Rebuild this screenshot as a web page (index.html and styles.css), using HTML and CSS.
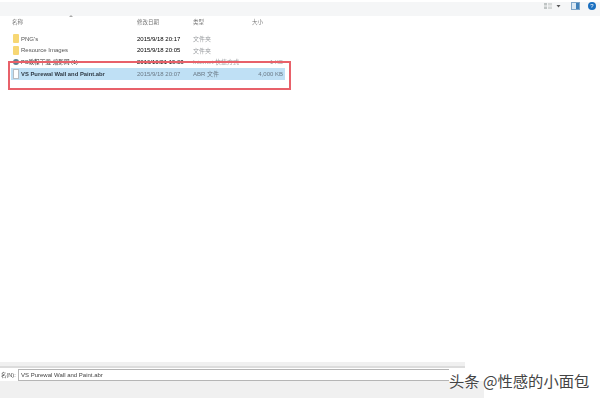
FILE: index.html
```html
<!DOCTYPE html>
<html lang="en">
<head>
  <meta charset="UTF-8" />
  <title>Save dialog</title>
  <link rel="stylesheet" href="styles.css">
</head>
<body>
  <div class="window">
    <div class="toolbar">
      <svg class="tool-views" width="18" height="8" viewBox="0 0 18 8">
        <rect x="0" y="1" width="3" height="2.5" fill="#bfc4c4"/>
        <rect x="4" y="1" width="4" height="2.5" fill="#d5d8d8"/>
        <rect x="0" y="4.5" width="3" height="2.5" fill="#bfc4c4"/>
        <rect x="4" y="4.5" width="4" height="2.5" fill="#d5d8d8"/>
        <path d="M12.5 3h4l-2 2.5z" fill="#555"/>
      </svg>
      <svg class="tool-pane" width="9" height="8" viewBox="0 0 9 8">
        <rect x="0.5" y="0.5" width="8" height="7" fill="#dbe8f3" stroke="#7fa6c9"/>
        <rect x="5" y="1" width="3" height="6" fill="#3f7fb8"/>
      </svg>
      <span class="tool-help">?</span>
    </div>

    <div class="files">
      <div class="row head">
        <span class="name">名称</span>
        <span class="date">修改日期</span>
        <span class="type">类型</span>
        <span class="size">大小</span>
      </div>
      <div class="sort-mark"></div>

      <div class="row first">
        <span class="name"><i class="folder"></i>PNG's</span>
        <span class="date">2015/9/18 20:17</span>
        <span class="type">文件夹</span>
        <span class="size"></span>
      </div>
      <div class="row">
        <span class="name"><i class="folder"></i>Resource Images</span>
        <span class="date">2015/9/18 20:05</span>
        <span class="type">文件夹</span>
        <span class="size"></span>
      </div>
      <div class="row cut">
        <span class="name"><i class="link"></i>PS教程下载-缩影网 (1)</span>
        <span class="date">2016/10/21 19:03</span>
        <span class="type">Internet 快捷方式</span>
        <span class="size">1 KB</span>
      </div>
      <div class="row selected">
        <span class="name"><i class="doc"></i>VS Purewal Wall and Paint.abr</span>
        <span class="date">2015/9/18 20:07</span>
        <span class="type">ABR 文件</span>
        <span class="size">4,000 KB</span>
      </div>
      <div class="red-box"></div>
    </div>

    <div class="bottom">
      <div class="bottom-line"></div>
      <div class="name-row">
        <span class="name-label">名(N):</span>
        <div class="name-input">VS Purewal Wall and Paint.abr</div>
      </div>
      <div class="bottom-panel"></div>
    </div>
  </div>
  <div class="watermark">头条 @性感的小面包</div>
</body>
</html>
```

FILE: styles.css
```css
* {
  box-sizing: border-box;
}
body {
  margin: 0;
  width: 600px;
  height: 400px;
  background: #fff;
  font-family: "Liberation Sans", "Noto Sans CJK SC", sans-serif;
  overflow: hidden;
  position: relative;
}
.window {
  display: flex;
  flex-direction: column;
  height: 400px;
  filter: blur(0.4px);
}
.toolbar {
  height: 14px;
  margin-top: 2px;
  flex-shrink: 0;
  background: #f5f6f7;
  display: flex;
  align-items: flex-start;
  justify-content: flex-end;
  padding-right: 4px;
}
.tool-views {
  margin-right: 9px;
}
.tool-pane {
  margin-right: 8px;
}
.tool-help {
  width: 8px;
  height: 8px;
  border-radius: 50%;
  background: #1a6fc0;
  color: #fff;
  font-size: 6px;
  line-height: 8px;
  text-align: center;
}
.files {
  flex: 1;
  position: relative;
  padding-left: 9px;
}
.row {
  display: flex;
  align-items: center;
  height: 11.5px;
  font-size: 6px;
  white-space: nowrap;
}
.head {
  height: 12px;
  font-size: 5.5px;
}
.first {
  margin-top: 5px;
}
.name {
  width: 128px;
  padding-left: 4px;
  display: flex;
  align-items: center;
  gap: 2px;
  color: #555;
}
.date {
  width: 56px;
  color: #9a9d a0;
}
.type {
  width: 57px;
  color: #9a9da0;
}
.size {
  width: 33px;
  text-align: right;
  color: #9a9da0;
}
.head .name {
  padding-left: 3px;
}
.head .name, .head .date, .head .type, .head .size {
  color: #777;
}
.head .size {
  text-align: left;
  padding-left: 2px;
}
.sort-mark {
  position: absolute;
  left: 69px;
  top: -1px;
  border-left: 2px solid transparent;
  border-right: 2px solid transparent;
  border-bottom: 2px solid #aaa;
}
.folder {
  width: 6px;
  height: 9px;
  background: #f7d774;
  border-radius: 1px;
  flex-shrink: 0;
}
.link {
  width: 6px;
  height: 6px;
  border-radius: 50%;
  background: #5d7f8e;
  flex-shrink: 0;
}
.doc {
  width: 6px;
  height: 10px;
  background: #fff;
  border: 1px solid #b6bcc2;
  flex-shrink: 0;
}
.cut .name {
  color: #333;
  font-size: 5.6px;
}
.selected {
  height: 12px;
  background: #bfe0f5;
  margin-left: 2px;
  width: 274px;
}
.selected .name {
  width: 126px;
  padding-left: 2px;
  color: #2f3a45;
  font-weight: bold;
  font-size: 5.85px;
}
.selected .date, .selected .type, .selected .size {
  color: #6b7a86;
}
.red-box {
  position: absolute;
  left: 8px;
  top: 45px;
  width: 283px;
  height: 29px;
  border: 2px solid #e8616a;
}
.bottom {
  flex-shrink: 0;
  height: 38px;
  display: flex;
  flex-direction: column;
}
.bottom-line {
  height: 6px;
  width: 465px;
  background: #f0f0f0;
  border-bottom: 2px solid #dcdcdc;
}
.name-row {
  display: flex;
  align-items: center;
  height: 12px;
  width: 449px;
  margin-top: 1px;
  flex-shrink: 0;
}
.name-label {
  width: 18px;
  font-size: 5.5px;
  color: #444;
  white-space: nowrap;
  padding-left: 1px;
}
.name-input {
  flex: 1;
  height: 12px;
  border: 1px solid #b5b5b5;
  border-right: 0;
  background: #fff;
  font-size: 6px;
  line-height: 10px;
  padding-left: 2px;
  color: #444;
}
.bottom-panel {
  flex: 1;
  width: 484px;
  margin-bottom: 2px;
  background: #f0f0f0;
}
.watermark {
  position: absolute;
  left: 449px;
  top: 372px;
  font-family: "Noto Sans CJK SC", sans-serif;
  font-size: 15.3px;
  line-height: 16px;
  color: #444;
  white-space: nowrap;
  text-shadow: 0 0 2px #fff;
}
```
